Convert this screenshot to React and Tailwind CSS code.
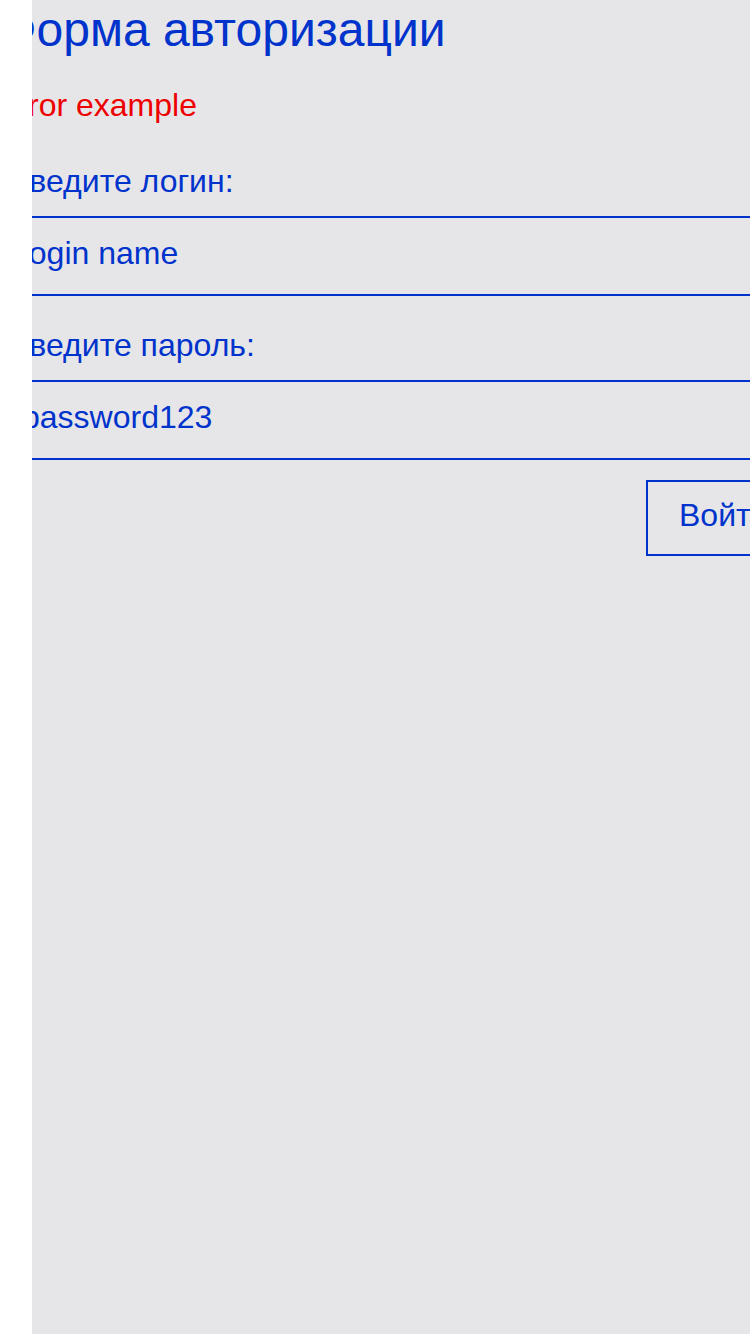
export default function App() {
  return (
    <div className="flex h-[1334px] w-[750px] bg-white font-['Liberation_Sans',Arial,sans-serif]">
      <div className="w-[32px] shrink-0" />
      <div className="flex-1 overflow-hidden bg-[#e6e6e9]">
        <div className="ml-[-24px] w-[900px] text-[#0033cc]">
          <h1 className="ml-[-8px] pt-[2px] text-[48px] leading-[55px] font-normal whitespace-nowrap">Форма авторизации</h1>
          <div className="ml-[-12px] mt-[30px] text-[32px] leading-[37px] text-[#ee0000] whitespace-nowrap">Error example</div>
          <div className="mt-[39px] text-[32px] leading-[37px] whitespace-nowrap">Введите логин:</div>
          <div className="mt-[16px] h-[80px] border-y-2 border-[#0033cc] pl-[3px] pt-[17px] text-[32px] leading-[37px] whitespace-nowrap">Login name</div>
          <div className="mt-[31px] text-[32px] leading-[37px] whitespace-nowrap">Введите пароль:</div>
          <div className="mt-[16px] h-[80px] border-y-2 border-[#0033cc] pl-[14px] pt-[17px] text-[32px] leading-[37px] whitespace-nowrap">password123</div>
          <div className="mt-[20px] flex">
            <div className="ml-[638px] h-[76px] w-[200px] border-2 border-[#0033cc] pl-[31px] pt-[15px] text-[32px] leading-[37px] whitespace-nowrap">Войти</div>
          </div>
        </div>
      </div>
    </div>
  );
}
